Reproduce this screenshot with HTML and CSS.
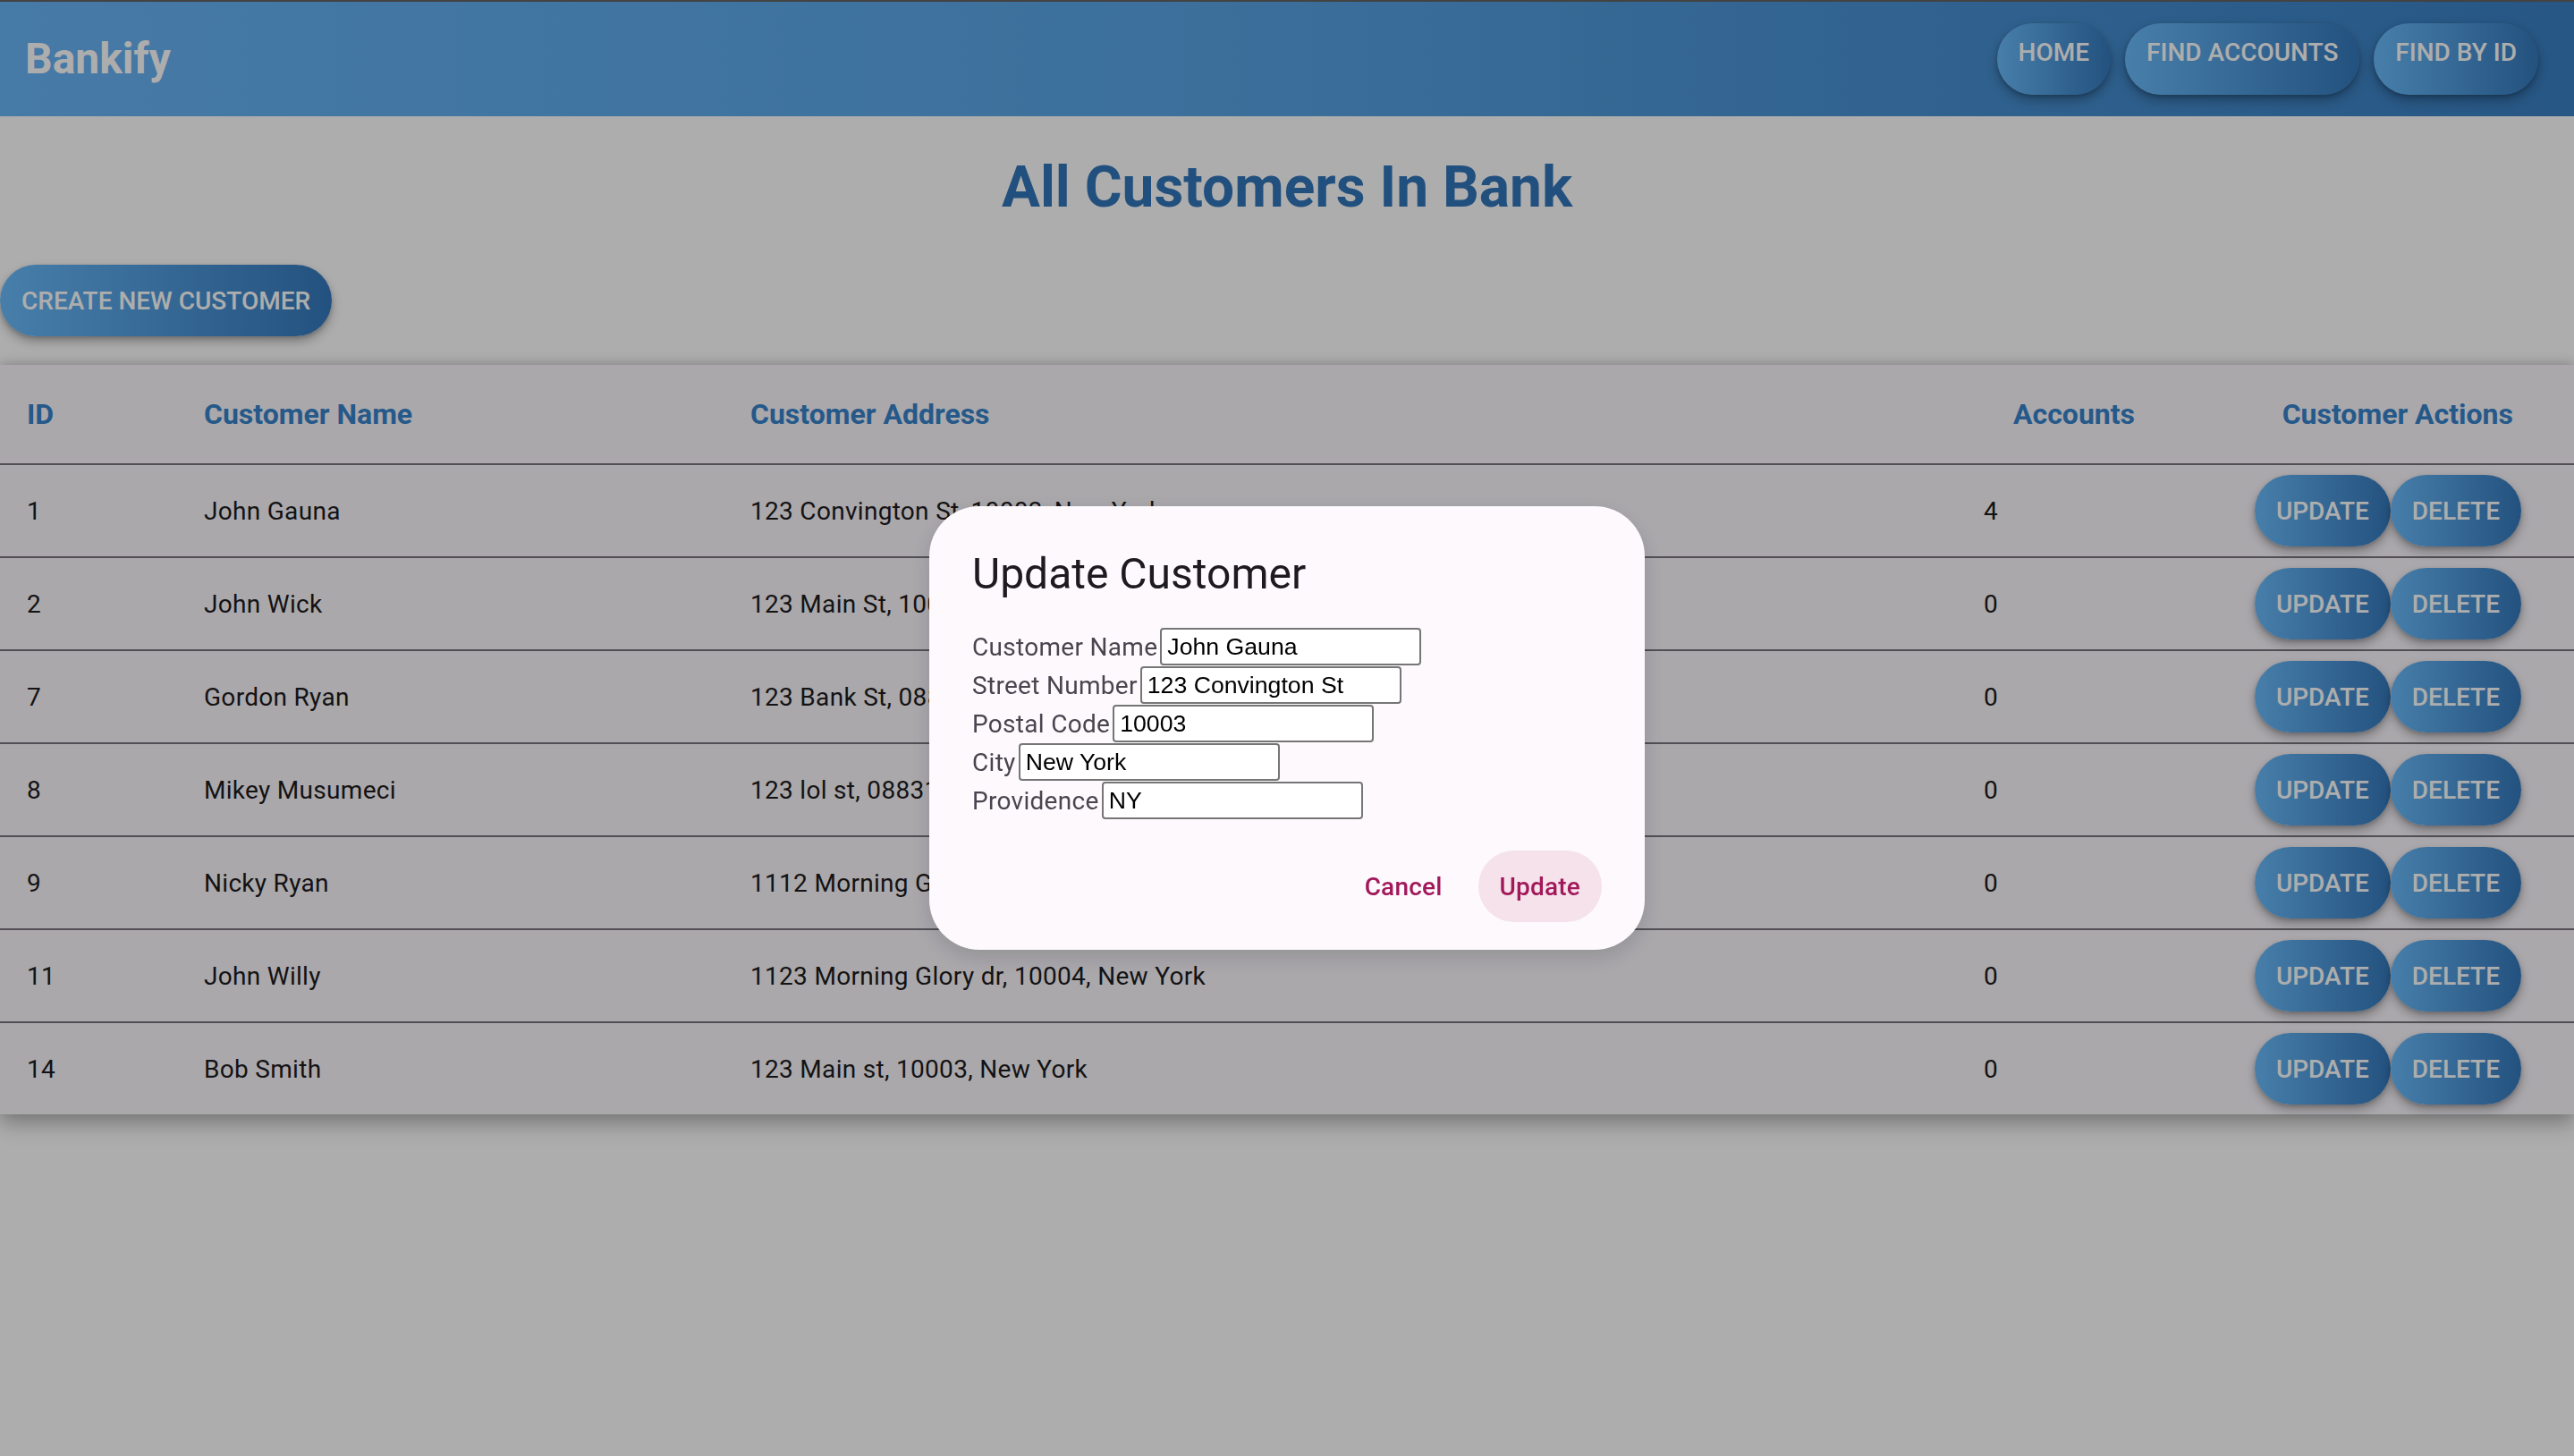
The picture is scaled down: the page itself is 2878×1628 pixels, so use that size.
FILE: index.html
```html
<!DOCTYPE html>
<html lang="en">
<head>
<meta charset="utf-8">
<title>Bankify</title>
<link rel="stylesheet" href="styles.css">
</head>
<body>
<header class="appbar">
  <div class="brand">Bankify</div>
  <nav class="nav">
    <button class="grad-btn nav-btn">Home</button>
    <button class="grad-btn nav-btn">Find Accounts</button>
    <button class="grad-btn nav-btn">Find By ID</button>
  </nav>
</header>

<main class="content">
  <h1 class="page-title">All Customers In Bank</h1>
  <button class="grad-btn create-btn">Create New Customer</button>

  <section class="table">
    <div class="row head">
      <div class="cell">ID</div>
      <div class="cell">Customer Name</div>
      <div class="cell">Customer Address</div>
      <div class="cell head-accounts">Accounts</div>
      <div class="cell head-actions">Customer Actions</div>
    </div>
    <div class="row">
      <div class="cell">1</div>
      <div class="cell">John Gauna</div>
      <div class="cell">123 Convington St, 10003, New York</div>
      <div class="cell">4</div>
      <div class="cell actions"><button class="grad-btn row-btn">Update</button><button class="grad-btn row-btn">Delete</button></div>
    </div>
    <div class="row">
      <div class="cell">2</div>
      <div class="cell">John Wick</div>
      <div class="cell">123 Main St, 10001, New York</div>
      <div class="cell">0</div>
      <div class="cell actions"><button class="grad-btn row-btn">Update</button><button class="grad-btn row-btn">Delete</button></div>
    </div>
    <div class="row">
      <div class="cell">7</div>
      <div class="cell">Gordon Ryan</div>
      <div class="cell">123 Bank St, 08831, New Jersey</div>
      <div class="cell">0</div>
      <div class="cell actions"><button class="grad-btn row-btn">Update</button><button class="grad-btn row-btn">Delete</button></div>
    </div>
    <div class="row">
      <div class="cell">8</div>
      <div class="cell">Mikey Musumeci</div>
      <div class="cell">123 lol st, 08831, New Jersey</div>
      <div class="cell">0</div>
      <div class="cell actions"><button class="grad-btn row-btn">Update</button><button class="grad-btn row-btn">Delete</button></div>
    </div>
    <div class="row">
      <div class="cell">9</div>
      <div class="cell">Nicky Ryan</div>
      <div class="cell">1112 Morning Glory dr, 10004, New York</div>
      <div class="cell">0</div>
      <div class="cell actions"><button class="grad-btn row-btn">Update</button><button class="grad-btn row-btn">Delete</button></div>
    </div>
    <div class="row">
      <div class="cell">11</div>
      <div class="cell">John Willy</div>
      <div class="cell">1123 Morning Glory dr, 10004, New York</div>
      <div class="cell">0</div>
      <div class="cell actions"><button class="grad-btn row-btn">Update</button><button class="grad-btn row-btn">Delete</button></div>
    </div>
    <div class="row">
      <div class="cell">14</div>
      <div class="cell">Bob Smith</div>
      <div class="cell">123 Main st, 10003, New York</div>
      <div class="cell">0</div>
      <div class="cell actions"><button class="grad-btn row-btn">Update</button><button class="grad-btn row-btn">Delete</button></div>
    </div>
  </section>
</main>

<div class="backdrop">
  <div class="dialog" role="dialog">
    <h2 class="dialog-title">Update Customer</h2>
    <form class="fields">
      <label class="field">Customer Name<input type="text" value="John Gauna"></label>
      <label class="field">Street Number<input type="text" value="123 Convington St"></label>
      <label class="field">Postal Code<input type="text" value="10003"></label>
      <label class="field">City<input type="text" value="New York"></label>
      <label class="field">Providence<input type="text" value="NY"></label>
    </form>
    <div class="dialog-actions">
      <button class="text-btn">Cancel</button>
      <button class="text-btn focused">Update</button>
    </div>
  </div>
</div>
</body>
</html>
```
FILE: styles.css
```css
html, body {
  margin: 0;
  padding: 0;
}

body {
  background: #ffffff;
  font-family: Roboto, "Noto Sans", sans-serif;
  min-height: 1628px;
  color: #1d1b20;
}

/* App bar */
.appbar {
  box-sizing: border-box;
  height: 130px;
  border-top: 2px solid #646464;
  background: linear-gradient(90deg, #68b4f6 0%, #5aa6e6 45%, #3a80c4 100%);
  display: flex;
  align-items: center;
  justify-content: space-between;
  padding: 0 40px 0 28px;
}

.brand {
  color: #ffffff;
  font-size: 48px;
  font-weight: 700;
  line-height: 1;
}

.nav {
  display: flex;
  gap: 16px;
}

/* Gradient pill buttons */
.grad-btn {
  border: 0;
  margin: 0;
  font-family: Roboto, "Noto Sans", sans-serif;
  font-size: 28px;
  font-weight: 500;
  letter-spacing: 0;
  text-transform: uppercase;
  color: #ffffff;
  background: linear-gradient(90deg, #6abbfb 0%, #3579bc 100%);
  border-radius: 40px;
  height: 80px;
  padding: 0 24px;
  box-shadow: 0 6px 12px rgba(0, 0, 0, 0.28), 0 2px 4px rgba(0, 0, 0, 0.16);
  white-space: nowrap;
}

.nav-btn {
  padding: 8px 24px 23px;
  line-height: 49px;
  box-shadow: 0 6px 14px rgba(0, 0, 0, 0.3), 0 2px 4px rgba(0, 0, 0, 0.18);
}

/* Content */
.content {
  display: flex;
  flex-direction: column;
  align-items: flex-start;
}

.page-title {
  align-self: stretch;
  text-align: center;
  margin: 41px 0 48px;
  font-size: 64px;
  line-height: 77px;
  font-weight: 700;
  color: #3376ba;
}

.create-btn {
  display: block;
}

/* Table */
.table {
  align-self: stretch;
  margin-top: 32px;
  background: #fbf8fd;
  box-shadow: 0 10px 22px rgba(0, 0, 0, 0.3), 0 -3px 10px rgba(0, 0, 0, 0.12);
}

.row {
  display: grid;
  grid-template-columns: 198px 611px 1379px 262px 428px;
  height: 102px;
  border-bottom: 2px solid #79747e;
}

.row:last-child {
  border-bottom: 0;
}

.row.head {
  height: 110px;
}

.cell {
  display: flex;
  align-items: center;
  padding-left: 30px;
  font-size: 28px;
  letter-spacing: 0.3px;
  color: #1d1b20;
  white-space: nowrap;
}

.head .cell {
  font-size: 32px;
  font-weight: 700;
  letter-spacing: 0;
  color: #3783cc;
}

.head .head-accounts {
  justify-content: center;
  padding-right: 30px;
}

.head .head-actions {
  justify-content: flex-end;
  padding-right: 68px;
}

.actions {
  justify-content: flex-end;
  padding-right: 59px;
}

.row-btn {
  height: 80px;
}

/* Modal */
.backdrop {
  position: fixed;
  inset: 0;
  background: rgba(0, 0, 0, 0.32);
  display: flex;
  align-items: center;
  justify-content: center;
}

.dialog {
  box-sizing: border-box;
  width: 800px;
  background: #fdf9fd;
  border-radius: 56px;
  padding: 44px 48px 31px;
  box-shadow: 0 8px 24px rgba(0, 0, 0, 0.15);
}

.dialog-title {
  margin: 0;
  font-size: 48px;
  line-height: 64px;
  font-weight: 400;
  color: #1d1b20;
}

.fields {
  margin: 28px 0 0;
  display: flex;
  flex-direction: column;
  gap: 1px;
}

.field {
  display: flex;
  align-items: center;
  height: 42px;
  font-size: 28px;
  letter-spacing: 0.3px;
  color: #49454f;
}

.field input {
  box-sizing: border-box;
  width: 292px;
  height: 42px;
  margin: 0 0 0 3px;
  padding: 0 6px;
  border: 2px solid #767676;
  border-radius: 4px;
  background: #ffffff;
  color: #000000;
  font-family: "Liberation Sans", Arial, sans-serif;
  font-size: 26.67px;
  letter-spacing: 0;
}

.dialog-actions {
  margin-top: 35px;
  display: flex;
  justify-content: flex-end;
  gap: 16px;
}

.text-btn {
  height: 80px;
  padding: 0 24px;
  border: 0;
  border-radius: 40px;
  background: transparent;
  font-family: Roboto, "Noto Sans", sans-serif;
  font-size: 28px;
  font-weight: 500;
  letter-spacing: 0.2px;
  color: #a2195b;
}

.text-btn.focused {
  background: #f5e2ea;
}
```
